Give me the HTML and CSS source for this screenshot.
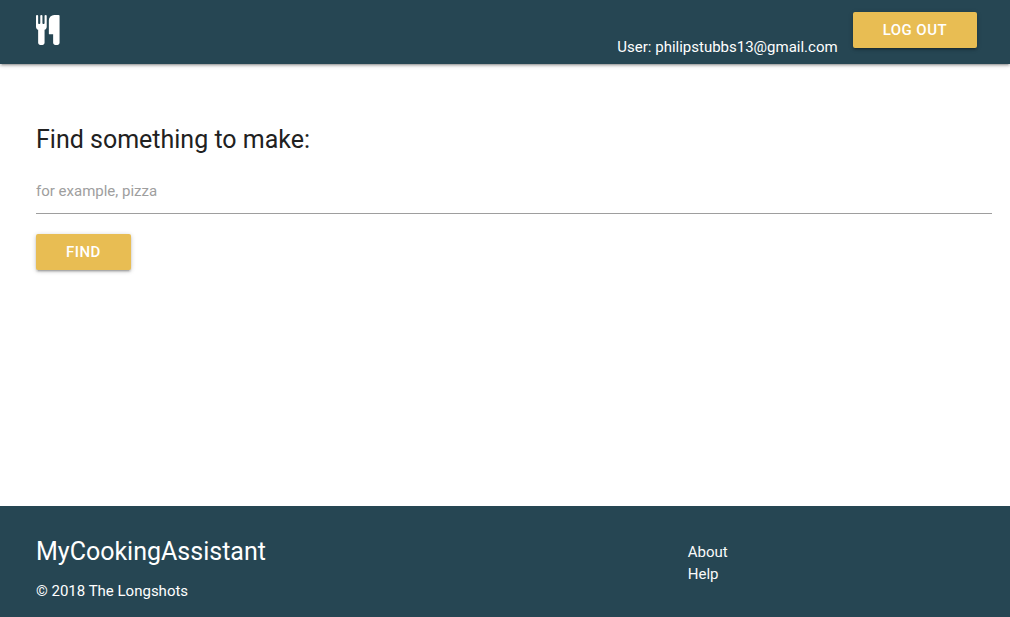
FILE: index.html
```html
<!DOCTYPE html>
<html lang="en">
<head>
  <meta charset="utf-8">
  <meta name="viewport" content="width=device-width, initial-scale=1">
  <title>MyCookingAssistant</title>
  <link rel="stylesheet" href="styles.css">
</head>
<body>
  <header class="navbar">
    <a class="brand" href="#" aria-label="MyCookingAssistant home">
      <svg class="brand-icon" viewBox="0 0 1434 1792" aria-hidden="true">
        <path transform="matrix(1 0 0 -1 0 1536)" d="M640 1472v-640q0 -61 -35.500 -111t-92.500 -70v-779q0 -52 -38 -90t-90 -38h-128q-52 0 -90 38t-38 90v779q-57 20 -92.500 70t-35.500 111v640q0 26 19 45t45 19t45 -19t19 -45v-416q0 -26 19 -45t45 -19t45 19t19 45v416q0 26 19 45t45 19t45 -19t19 -45v-416q0 -26 19 -45t45 -19t45 19t19 45v416q0 26 19 45t45 19t45 -19t19 -45zM1408 1472v-1600q0 -52 -38 -90t-90 -38h-128q-52 0 -90 38t-38 90v512h-224q-13 0 -22.500 9.500t-9.500 22.500v800q0 132 94 226t226 94h256q26 0 45 -19t19 -45z"/>
      </svg>
    </a>
    <div class="account">
      <span class="user">User: philipstubbs13@gmail.com</span>
      <button class="btn" type="button">LOG OUT</button>
    </div>
  </header>
  <main class="content">
    <form class="search">
      <label class="search-label" for="query">Find something to make:</label>
      <input class="search-input" id="query" type="text" placeholder="for example, pizza">
      <button class="btn" type="button">FIND</button>
    </form>
  </main>
  <footer class="footer">
    <div>
      <h2 class="footer-title">MyCookingAssistant</h2>
      <p class="copyright">© 2018 The Longshots</p>
    </div>
    <nav class="footer-links">
      <a href="#">About</a>
      <a href="#">Help</a>
    </nav>
  </footer>
</body>
</html>
```
FILE: styles.css
```css
* {
  box-sizing: border-box;
}

body {
  display: flex;
  flex-direction: column;
  min-height: 100vh;
  margin: 0;
  font-family: Roboto, sans-serif;
  font-size: 15px;
  line-height: 22px;
  color: #212121;
  background: #fff;
}

.navbar {
  display: flex;
  justify-content: space-between;
  min-height: 64px;
  padding: 12px 33px 0 36px;
  color: #fff;
  background: #264653;
  box-shadow: 0 2px 2px rgba(0, 0, 0, 0.14), 0 3px 1px -2px rgba(0, 0, 0, 0.12), 0 1px 5px rgba(0, 0, 0, 0.2);
}

.brand {
  padding-top: 3px;
}

.brand-icon {
  display: block;
  width: 24px;
  height: 30px;
  fill: #fff;
}

.account {
  display: flex;
  align-items: flex-start;
  gap: 15px;
}

.user {
  padding-top: 24px;
}

.btn {
  height: 36px;
  padding: 0 30px;
  border: 0;
  border-radius: 2px;
  font: 500 15px/36px Roboto, sans-serif;
  letter-spacing: 0.03em;
  color: #fff;
  background: #e8bd53;
  box-shadow: 0 2px 2px rgba(0, 0, 0, 0.14), 0 3px 1px -2px rgba(0, 0, 0, 0.12), 0 1px 5px rgba(0, 0, 0, 0.2);
  cursor: pointer;
}

.content {
  flex: 1;
  padding: 60px 18px 20px 36px;
}

.search-label {
  display: block;
  font-size: 25px;
  line-height: 32px;
}

.search-input {
  display: block;
  width: 100%;
  height: 46px;
  margin: 12px 0 20px;
  padding: 0;
  border: 0;
  border-bottom: 1px solid #9e9e9e;
  outline: 0;
  font: 15px Roboto, sans-serif;
  color: inherit;
  background: transparent;
}

.search-input::placeholder {
  color: #9e9e9e;
}

.footer {
  display: grid;
  grid-template-columns: 15fr 7fr;
  padding: 30px 18px 15px 36px;
  color: #fff;
  background: #264653;
}

.footer-title {
  margin: 0 0 12px;
  font-size: 25px;
  font-weight: 400;
  line-height: 32px;
}

.copyright {
  margin: 0;
}

.footer-links {
  display: flex;
  flex-direction: column;
  align-items: flex-start;
  padding-top: 5px;
}

.footer-links a {
  color: #fafafa;
  text-decoration: none;
}
```
